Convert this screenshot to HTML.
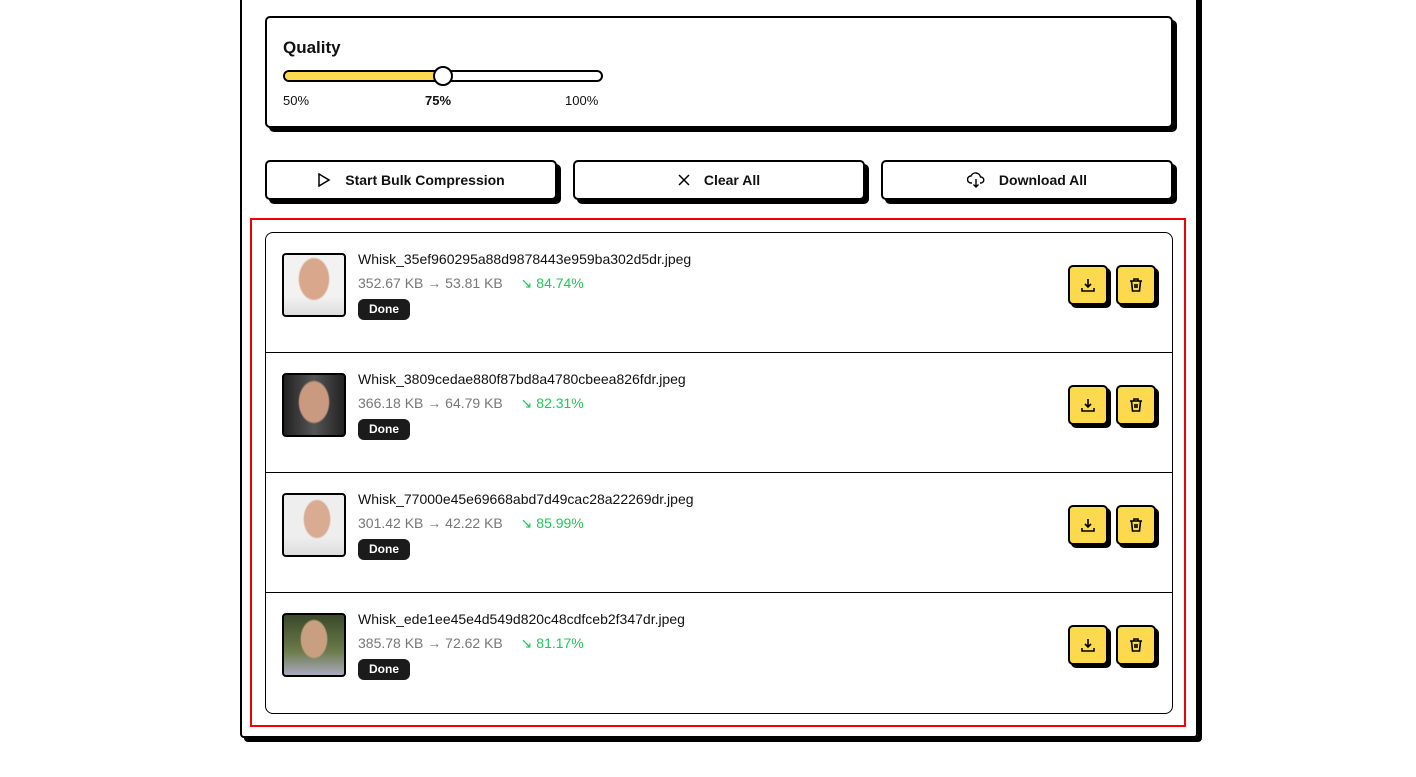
<!DOCTYPE html>
<html><head><meta charset="utf-8"><style>
*{box-sizing:border-box;margin:0;padding:0}
body{width:1416px;height:777px;background:#fff;font-family:"Liberation Sans",sans-serif;color:#111;position:relative;overflow:hidden}
.outer{position:absolute;left:240px;top:-10px;width:958px;height:748px;border:2px solid #000;border-top:none;border-radius:0 0 4px 4px;box-shadow:4px 4px 0 #000}
.card{position:absolute;left:265px;top:16px;width:908px;height:112px;border:2px solid #000;border-radius:5px;box-shadow:4px 4px 0 #000;background:#fff}
.q{position:absolute;left:16px;top:20px;font-weight:bold;font-size:17px}
.track{position:absolute;left:16px;top:52px;width:320px;height:12px;border:2px solid #000;border-radius:6px;overflow:hidden}
.fill{width:160px;height:100%;background:#fcd94f}
.thumb{position:absolute;left:166px;top:48px;width:20px;height:20px;border:2px solid #000;border-radius:50%;background:#fff}
.lab{position:absolute;top:75px;font-size:13px}
.btn{position:absolute;top:160px;width:292px;height:40px;border:2px solid #000;border-radius:5px;box-shadow:4px 4px 0 #000;background:#fff;font-weight:bold;font-size:14px;display:flex;align-items:center;justify-content:center;gap:14px}
.red{position:absolute;left:250px;top:218px;width:936px;height:509px;border:2px solid #e00}
.list{position:absolute;left:265px;top:232px;width:908px;height:482px;border:1px solid #000;border-radius:8px;overflow:hidden}
.row{position:absolute;left:0;width:100%;height:120px;border-bottom:1px solid #000}
.img{position:absolute;left:16px;top:20px;width:64px;height:64px;border:2px solid #000;border-radius:4px;overflow:hidden}
.fn{position:absolute;left:92px;top:18px;font-size:14px}
.sz{position:absolute;left:92px;top:42px;font-size:14px;color:#777}
.pct{color:#1ec85a;margin-left:14px}
.done{position:absolute;left:92px;top:66px;width:52px;height:21px;background:#1b1b1b;color:#fff;font-size:12px;font-weight:bold;border-radius:6px;text-align:center;line-height:21px}
.ab{position:absolute;top:32px;width:40px;height:40px;background:#fcd94f;border:2px solid #000;border-radius:5px;box-shadow:3px 3px 0 #000;display:flex;align-items:center;justify-content:center}
</style></head><body>
<div class="outer"></div>
<div class="card">
<div class="q">Quality</div>
<div class="track"><div class="fill"></div></div>
<div class="thumb"></div>
<div class="lab" style="left:16px">50%</div>
<div class="lab" style="left:158px;font-weight:bold">75%</div>
<div class="lab" style="left:298px">100%</div>
</div>
<div class="btn" style="left:265px"><svg width="14" height="14" viewBox="0 0 14 14"><path d="M2 1L12 7L2 13Z" fill="none" stroke="#000" stroke-width="1.5"/></svg>Start Bulk Compression</div>
<div class="btn" style="left:573px"><svg width="12" height="12" viewBox="0 0 12 12"><path d="M1 1L11 11M11 1L1 11" stroke="#000" stroke-width="1.5"/></svg>Clear All</div>
<div class="btn" style="left:881px"><svg width="18" height="16" viewBox="0 0 18 16"><path d="M5 11H4a3.5 3.5 0 0 1 0-7 5 5 0 0 1 9.5 1A3 3 0 0 1 14 11h-1M9 7v8M6.5 12.5L9 15l2.5-2.5" fill="none" stroke="#000" stroke-width="1.4"/></svg>Download All</div>
<div class="red"></div>
<div class="list">
<div class="row" style="top:0"><div class="img" style="background:radial-gradient(ellipse 16px 22px at 50% 40%,#d9a78c 90%,transparent),linear-gradient(#f2f2f2 70%,#ddd)"></div><div class="fn">Whisk_35ef960295a88d9878443e959ba302d5dr.jpeg</div><div class="sz">352.67 KB → 53.81 KB <span class="pct">↘ 84.74%</span></div><div class="done">Done</div>
<div class="ab" style="left:802px"><svg width="16" height="16" viewBox="0 0 16 16" fill="none" stroke="#000" stroke-width="1.6"><path d="M8 2v8M5 7l3 3 3-3M2 11v3h12v-3"/></svg></div><div class="ab" style="left:850px"><svg width="16" height="16" viewBox="0 0 16 16" fill="none" stroke="#000" stroke-width="1.6"><path d="M2 4h12M6 4V2h4v2M3.5 4l1 10h7l1-10M7 7v4M9 7v4"/></svg></div></div>
<div class="row" style="top:120px"><div class="img" style="background:radial-gradient(ellipse 16px 22px at 50% 45%,#c99a80 90%,transparent),linear-gradient(90deg,#222,#555 50%,#222)"></div><div class="fn">Whisk_3809cedae880f87bd8a4780cbeea826fdr.jpeg</div><div class="sz">366.18 KB → 64.79 KB <span class="pct">↘ 82.31%</span></div><div class="done">Done</div>
<div class="ab" style="left:802px"><svg width="16" height="16" viewBox="0 0 16 16" fill="none" stroke="#000" stroke-width="1.6"><path d="M8 2v8M5 7l3 3 3-3M2 11v3h12v-3"/></svg></div><div class="ab" style="left:850px"><svg width="16" height="16" viewBox="0 0 16 16" fill="none" stroke="#000" stroke-width="1.6"><path d="M2 4h12M6 4V2h4v2M3.5 4l1 10h7l1-10M7 7v4M9 7v4"/></svg></div></div>
<div class="row" style="top:240px"><div class="img" style="background:radial-gradient(ellipse 14px 20px at 55% 40%,#d8ab92 90%,transparent),linear-gradient(#eee 70%,#ddd)"></div><div class="fn">Whisk_77000e45e69668abd7d49cac28a22269dr.jpeg</div><div class="sz">301.42 KB → 42.22 KB <span class="pct">↘ 85.99%</span></div><div class="done">Done</div>
<div class="ab" style="left:802px"><svg width="16" height="16" viewBox="0 0 16 16" fill="none" stroke="#000" stroke-width="1.6"><path d="M8 2v8M5 7l3 3 3-3M2 11v3h12v-3"/></svg></div><div class="ab" style="left:850px"><svg width="16" height="16" viewBox="0 0 16 16" fill="none" stroke="#000" stroke-width="1.6"><path d="M2 4h12M6 4V2h4v2M3.5 4l1 10h7l1-10M7 7v4M9 7v4"/></svg></div></div>
<div class="row" style="top:360px;border-bottom:none"><div class="img" style="background:radial-gradient(ellipse 14px 20px at 50% 40%,#c8a080 90%,transparent),linear-gradient(#3a4a2a,#6a7a4a 60%,#aab 100%)"></div><div class="fn">Whisk_ede1ee45e4d549d820c48cdfceb2f347dr.jpeg</div><div class="sz">385.78 KB → 72.62 KB <span class="pct">↘ 81.17%</span></div><div class="done">Done</div>
<div class="ab" style="left:802px"><svg width="16" height="16" viewBox="0 0 16 16" fill="none" stroke="#000" stroke-width="1.6"><path d="M8 2v8M5 7l3 3 3-3M2 11v3h12v-3"/></svg></div><div class="ab" style="left:850px"><svg width="16" height="16" viewBox="0 0 16 16" fill="none" stroke="#000" stroke-width="1.6"><path d="M2 4h12M6 4V2h4v2M3.5 4l1 10h7l1-10M7 7v4M9 7v4"/></svg></div></div>
</div>
</body></html>
